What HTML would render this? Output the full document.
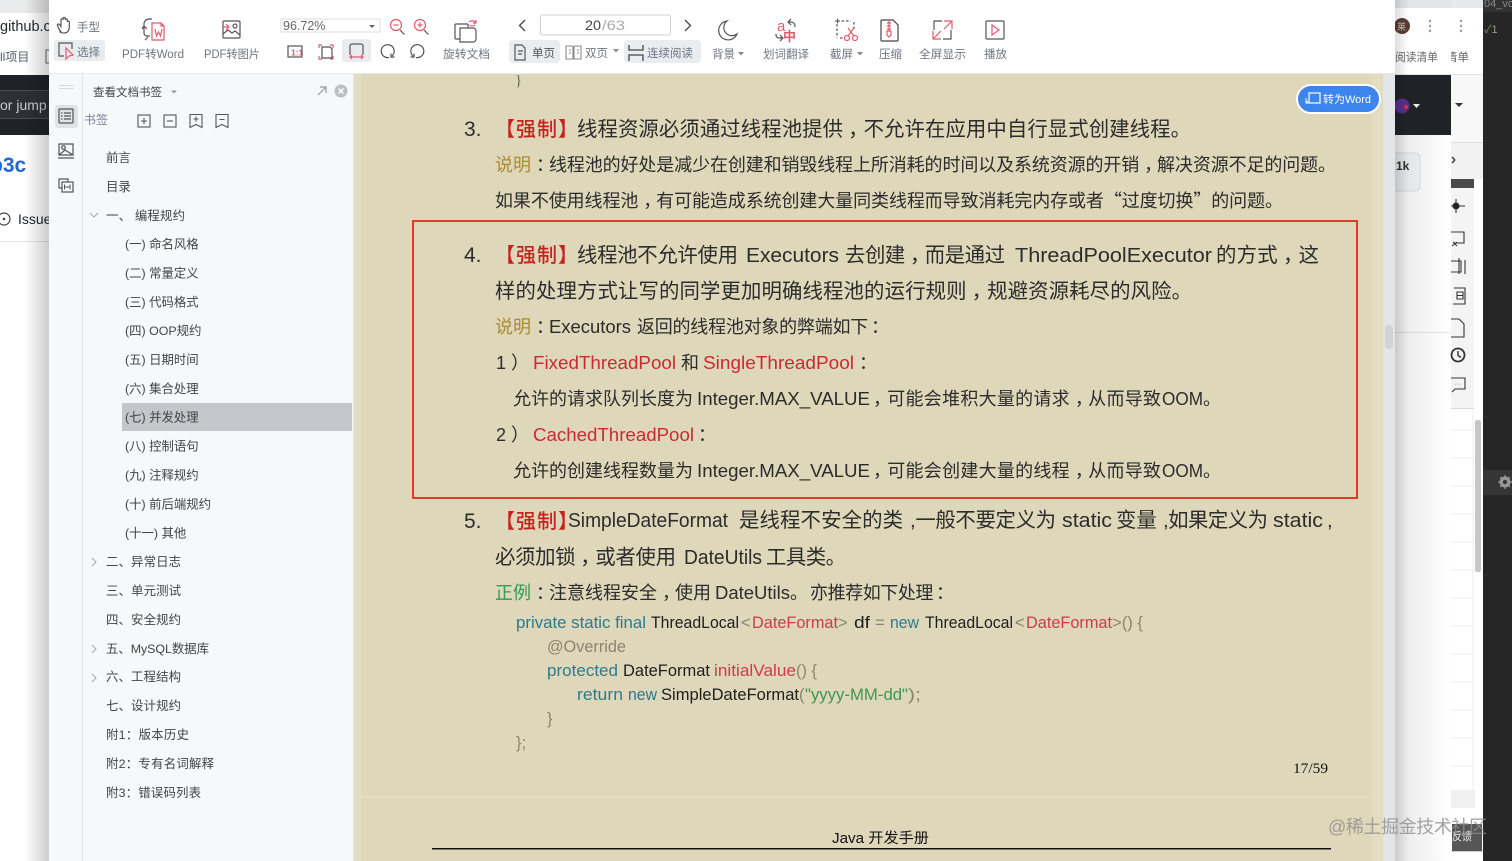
<!DOCTYPE html>
<html lang="zh"><head><meta charset="utf-8"><title>PDF</title>
<style>
html,body{margin:0;padding:0;background:#252525;width:1512px;height:861px;overflow:hidden}
body>svg{display:block;position:absolute;left:0;top:0;filter:blur(.3px)}
text{font-family:"Liberation Sans","Noto Sans CJK SC",sans-serif;white-space:pre}
.tb{font-size:11.5px;fill:#6f7680}
.sb{font-size:12.4px;fill:#444}
.d{font-size:20.4px;fill:#2c2c2c}
.s{font-size:18px;fill:#2c2c2c}
.r{fill:#c92a33}
.br{font-size:20px;fill:#c4231d;font-weight:500}
.o{font-size:18px;fill:#a98c33}
.g{font-size:18px;fill:#2f9a52}
.c{font-size:16.5px;fill:#1e1e1e}
.k{fill:#2b7b8f}.m{fill:#8a8572}.e{fill:#cf3a4c}.n{fill:#3f9650}
.q{font-family:"Noto Sans CJK SC",sans-serif}
.ic{fill:none;stroke:#555;stroke-width:1.2}
.ir{fill:none;stroke:#e2596d;stroke-width:1.2}
</style></head><body>
<svg width="1512" height="861" viewBox="0 0 1512 861" xmlns="http://www.w3.org/2000/svg">
<defs>
<linearGradient id="sh" x1="0" x2="1"><stop offset="0" stop-color="#000" stop-opacity="0"/><stop offset="1" stop-color="#000" stop-opacity=".2"/></linearGradient>
<linearGradient id="shr" x1="0" x2="1"><stop offset="0" stop-color="#000" stop-opacity=".13"/><stop offset="1" stop-color="#000" stop-opacity="0"/></linearGradient>
<clipPath id="cl"><rect x="1451" y="40" width="32" height="30"/></clipPath>
</defs>

<!-- left background window -->
<rect x="0" y="0" width="49" height="861" fill="#fff"/>
<rect x="0" y="0" width="49" height="13" fill="#e9eaeb"/>
<text x="0" y="31" font-size="14.5" fill="#24292f">github.c</text>
<text x="0" y="61" font-size="12" fill="#57606a">ll项目</text>
<rect x="46" y="50" width="4" height="13" fill="none" stroke="#666"/>
<rect x="0" y="75" width="49" height="60" fill="#1f2328"/>
<rect x="0" y="90" width="49" height="29" fill="#2d3136"/>
<rect x="0" y="90" width="49" height="1" fill="#4a4e53"/>
<rect x="0" y="118" width="49" height="1" fill="#4a4e53"/>
<text x="0" y="110" font-size="14" fill="#c9ccd0">or jump</text>
<text x="-10" y="172" font-size="21" font-weight="700" fill="#2268d2">b3c</text>
<circle cx="4" cy="219" r="6" fill="none" stroke="#444" stroke-width="1.2"/><circle cx="4" cy="219" r="1.3" fill="#444"/>
<text x="18" y="224" font-size="14" fill="#24292f">Issue</text>
<rect x="0" y="241" width="49" height="1" fill="#e1e3e5"/>
<rect x="25" y="0" width="24" height="861" fill="url(#sh)"/>

<!-- right background windows -->
<rect x="1395" y="0" width="56" height="861" fill="#fff"/>
<rect x="1395" y="0" width="56" height="8" fill="#e3e5e7"/>
<circle cx="1402" cy="26" r="8" fill="#5a3c34"/>
<text x="1397" y="30" font-size="9" fill="#d8c8c0">莱</text>
<circle cx="1430" cy="21" r="1.2" fill="#999"/><circle cx="1430" cy="26" r="1.2" fill="#999"/><circle cx="1430" cy="31" r="1.2" fill="#999"/>
<text x="1395" y="61" font-size="11.5" fill="#666" textLength="43" lengthAdjust="spacingAndGlyphs">阅读清单</text>
<rect x="1395" y="74" width="56" height="1" fill="#e2e2e2"/>
<rect x="1395" y="75" width="56" height="60" fill="#1f2328"/>
<circle cx="1402" cy="106" r="7.5" fill="#5a2d8a"/><circle cx="1406" cy="107" r="2" fill="#d33"/>
<path d="M1413 104h7l-3.500 4z" fill="#eee"/>
<rect x="1380" y="153" width="40" height="38" rx="5" fill="#f6f7f8" stroke="#e1e3e6"/>
<text x="1396" y="170" font-size="12" font-weight="700" fill="#333">1k</text>
<rect x="1395" y="332" width="56" height="1" fill="#e6e7e9"/>
<rect x="1395" y="135" width="56" height="726" fill="url(#shr)" opacity=".7"/>
<rect x="1395" y="0" width="14" height="861" fill="url(#shr)"/>

<rect x="1451" y="0" width="32" height="861" fill="#fff"/>
<rect x="1451" y="0" width="32" height="8" fill="#e7e8e9"/>
<circle cx="1461" cy="21" r="1.2" fill="#999"/><circle cx="1461" cy="26" r="1.2" fill="#999"/><circle cx="1461" cy="31" r="1.2" fill="#999"/>
<text x="1446" y="61" font-size="11.5" fill="#666" clip-path="url(#cl)">清单</text>
<rect x="1451" y="74" width="32" height="1" fill="#e2e2e2"/>
<rect x="1451" y="75" width="32" height="68" fill="#f8f8f8"/>
<path d="M1455 103h8l-4 4z" fill="#333"/>
<rect x="1451" y="143" width="32" height="36" fill="#f2f2f2"/><rect x="1451" y="142" width="32" height="1" fill="#ddd"/>
<path d="M1452 157l3 3m-3 3l3-3" fill="none" stroke="#333" stroke-width="1.4"/>
<rect x="1451" y="179" width="23" height="9" fill="#4a4a4a"/>
<rect x="1451" y="188" width="23" height="220" fill="#f4f4f4"/>
<rect x="1451" y="408" width="23" height="1" fill="#d8d8d8"/>
<g fill="none" stroke="#333" stroke-width="1.1">
<path d="M1451 206h14M1456 199v14"/><circle cx="1456" cy="206" r="3" fill="#222"/>
<path d="M1451 232h13v11h-10M1452 246l5-4m-4 0l4 4"/>
<path d="M1451 261h10v11h-10M1459 258v16M1465 260v14"/>
<path d="M1454 288h11v16h-12M1457 292h6v7h-6zM1457 295.500h6"/>
<path d="M1451 319h8l5 5v13h-13"/>
<circle cx="1458" cy="355" r="6.500" stroke-width="1.800"/><path d="M1458 351v4.500l3 2" stroke-width="1.400"/>
<path d="M1451 378h14v11h-10l-3 3"/>
</g>
<text x="1454" y="386" font-size="7" fill="#555">···</text>
<g stroke="#eeeeee"><path d="M1452 430h22M1452 458h22M1452 486h22M1452 514h22M1452 542h22M1452 570h22M1452 598h22M1452 626h22M1452 654h22M1452 682h22M1452 710h22M1452 738h22M1452 766h22M1473 410v380"/></g>
<rect x="1451" y="790" width="24" height="18" fill="#f0f0f0"/>
<rect x="1475" y="420" width="6" height="152" rx="2" fill="#c6c6c6"/>
<rect x="1452" y="824" width="30" height="27" fill="#565656"/>
<text x="1452" y="840" font-size="11" fill="#eee" textLength="20" lengthAdjust="spacingAndGlyphs">反馈</text>
<rect x="1451" y="851" width="32" height="1" fill="#ccc"/>

<rect x="1483" y="0" width="29" height="861" fill="#262626"/>
<rect x="1483" y="0" width="29" height="12" fill="#333"/>
<text x="1484" y="7" font-size="11" fill="#888">04_vo</text>
<text x="1484" y="33" font-size="11" fill="#6a9a5a">✓<tspan fill="#999">1</tspan></text>
<rect x="1483" y="470" width="29" height="25" fill="#353535"/>
<circle cx="1505" cy="482" r="4" fill="none" stroke="#999" stroke-width="3"/>
<path d="M1505 475v14M1498 482h14M1500 477l10 10M1510 477l-10 10" stroke="#999" stroke-width="1.200"/>
<circle cx="1505" cy="482" r="2" fill="#353535"/>

<!-- main window -->
<rect x="49" y="0" width="1346" height="74" fill="#fff"/>
<rect x="49" y="73" width="1346" height="1" fill="#e9e9e9"/>
<rect x="49" y="74" width="33" height="787" fill="#f7f8fa"/>
<rect x="82" y="74" width="272" height="787" fill="#f7f8fa"/>
<rect x="82" y="74" width="1" height="787" fill="#e4e5e8"/>
<rect x="353" y="74" width="1" height="787" fill="#e9e6d8"/>
<rect x="354" y="74" width="1029" height="787" fill="#dfd7b9"/>
<rect x="354" y="74" width="8" height="787" fill="#e4dcc0"/>
<rect x="1372" y="74" width="11" height="787" fill="#e4dcc0"/>
<rect x="362" y="796" width="1010" height="2" fill="#e3dcc2"/>
<rect x="1383" y="74" width="12" height="787" fill="#e4e5e7"/>
<rect x="1385" y="325" width="8" height="24" rx="4" fill="#d2d3d6"/>

<!-- toolbar left -->
<g class="ic">
<path d="M61 32c-2-3-3-5-3.500-6.500-.5-1.500 1-2 2-1l1.500 2V20c0-1.500 2-1.500 2 0v-1.500c0-1.500 2.200-1.500 2.200 0V20c0-1.500 2.100-1.500 2.100 0v2c0-1.200 2-1.200 2 0v5c0 3-1.500 6-5 6-2 0-3.500-.2-4.300-1z"/>
</g>
<text x="77" y="31" class="tb" textLength="23" lengthAdjust="spacingAndGlyphs">手型</text>
<rect x="54" y="40" width="51" height="21" rx="3" fill="#e8ecef"/>
<path class="ic" d="M72 49v-6H59v13h5"/>
<path class="ir" d="M66 48v11l3-3 4-1z"/>
<text x="77" y="56" class="tb" textLength="23" lengthAdjust="spacingAndGlyphs">选择</text>

<path class="ic" d="M150 36h-3a3 3 0 0 1-3-3v-9a5 5 0 0 1 5-5h3M147 29l-3-3-2 3M148 37l-3 3"/>
<path class="ir" d="M152 23h9l3 3v14h-12zM161 23v3h3M155 29l1.500 7 2-4 2 4 1.500-7"/>
<text x="122" y="58" class="tb" textLength="62" lengthAdjust="spacingAndGlyphs">PDF转Word</text>
<rect class="ic" x="223" y="21" width="17" height="17" rx="1"/>
<circle class="ic" cx="235" cy="26" r="2"/>
<path class="ic" d="M223 34l5-4 4 3 3-2 5 4"/>
<path class="ir" d="M222 27h7m-3-3 3 3-3 3"/>
<text x="204" y="58" class="tb" textLength="56" lengthAdjust="spacingAndGlyphs">PDF转图片</text>

<rect x="281" y="19" width="99" height="13" fill="#fff" stroke="#dcdde0"/>
<text x="283" y="30" font-size="12.500" fill="#666">96.72%</text>
<path d="M369 25h6l-3 3z" fill="#666"/>
<circle class="ir" cx="396" cy="25" r="5.500"/><path class="ic" d="M400 30l4.500 4.500"/><path class="ir" d="M393.500 25h5"/>
<circle class="ir" cx="420" cy="25" r="5.500"/><path class="ic" d="M424 30l4.500 4.500"/><path class="ir" d="M417.500 25h5M420 22.500v5"/>

<rect class="ic" x="288" y="46" width="14" height="11"/>
<text x="291" y="55.500" font-size="8.500" font-weight="700" fill="#e2596d">1:1</text>
<path class="ic" d="M322 47h8l2 2v9h-10z"/>
<path class="ir" d="M319 48v-3h3M333 48v-3h-3M319 56v3h3M333 56v3h-3"/>
<rect x="342" y="39" width="29" height="23" rx="3" fill="#e8ecef"/>
<path class="ic" d="M350 55v-9a2 2 0 0 1 2-2h9a2 2 0 0 1 2 2v9"/>
<path class="ir" d="M350 57h13M352 55l-2 2 2 2M361 55l2 2-2 2"/>
<path class="ic" d="M392 56a6.500 6.500 0 1 0-3 1.500M391 53.500v3.500h3.500"/>
<path class="ic" d="M413 56a6.500 6.500 0 1 1 3 1.500M414 53.500v3.500h-3.500"/>

<rect class="ic" x="455" y="24" width="13" height="15" rx="1"/>
<path d="M460 28h13a3 3 0 0 1 3 3v8a3 3 0 0 1-3 3h-13z" fill="#fff" stroke="#555" stroke-width="1.200"/>
<path class="ir" d="M469 22a4.500 4.500 0 0 1 7 1M476 20v3h-3M475 25a4.500 4.500 0 0 1-5.500 0"/>
<text x="443" y="58" class="tb" textLength="47" lengthAdjust="spacingAndGlyphs">旋转文档</text>

<path d="M525 20l-5.500 5.500 5.500 5.500M685 20l5.500 5.500-5.500 5.500" fill="none" stroke="#444" stroke-width="1.300"/>
<rect x="540.500" y="15" width="130" height="20" rx="2" fill="#fff" stroke="#cfd0d3"/>
<text x="585" y="30" font-size="13.500" fill="#444" textLength="16" lengthAdjust="spacingAndGlyphs">20</text>
<text x="602" y="30" font-size="13.500" fill="#aaa" textLength="23" lengthAdjust="spacingAndGlyphs">/63</text>

<rect x="509" y="40" width="51" height="23" rx="4" fill="#e9edf1"/>
<path class="ic" d="M515 45h7l3 3v12h-10zM518 51h5M518 54h4"/>
<text x="532" y="57" class="tb" textLength="23" lengthAdjust="spacingAndGlyphs" style="fill:#555">单页</text>
<path d="M566 46h6a1 1 0 0 1 1 1v12h-7zM581 46h-6a1 1 0 0 0-1 1v12h7zM569 50h2M569 53h2M577 50h2M577 53h2" fill="none" stroke="#888" stroke-width="1.100"/>
<text x="585" y="57" class="tb" textLength="23" lengthAdjust="spacingAndGlyphs">双页</text>
<path d="M613 49h6l-3 3.500z" fill="#888"/>
<rect x="624" y="40" width="77" height="23" rx="4" fill="#e9edf1"/>
<path d="M629 45v5h14v-5M629 61v-6h14v6" fill="none" stroke="#444" stroke-width="1.300" />
<text x="647" y="57" class="tb" textLength="46" lengthAdjust="spacingAndGlyphs">连续阅读</text>

<path class="ic" d="M727 21a9.500 9.500 0 1 0 10 13 8 8 0 0 1-10-13z"/>
<text x="712" y="58" class="tb" textLength="23" lengthAdjust="spacingAndGlyphs">背景</text>
<path d="M738 52h6l-3 3.500z" fill="#888"/>
<text x="777" y="31" font-size="15" fill="#e2596d">a</text>
<text x="783" y="41" font-size="13" fill="#e2596d" font-weight="700">中</text>
<path class="ic" d="M791 19l-3 3 3 3M788 22h3a4 4 0 0 1 4 4v1M776 34v1a3 3 0 0 0 3 3h3M780 35l3 3-3 3"/>
<text x="763" y="58" class="tb" textLength="46" lengthAdjust="spacingAndGlyphs">划词翻译</text>
<path class="ic" d="M837 21h14M854 22v8M837 24v14M840 38h4" stroke-dasharray="2.500 2"/>
<path d="M835 21h5M837.500 18.500v5" stroke="#555" fill="none"/>
<circle class="ir" cx="847" cy="38" r="2.500"/><circle class="ir" cx="855" cy="38" r="2.500"/>
<path class="ir" d="M848 36l6-8M854 36l-6-8"/>
<text x="830" y="58" class="tb" textLength="23" lengthAdjust="spacingAndGlyphs">截屏</text>
<path d="M857 52h6l-3 3.500z" fill="#888"/>
<path d="M882 20h11l5 5v15a1 1 0 0 1-1 1h-15a1 1 0 0 1-1-1V21a1 1 0 0 1 1-1z" fill="none" stroke="#444" stroke-width="1.200"/>
<path class="ir" d="M889 21v10M887 23h4M887 26h4M887 29h4M887 31h4v4l-2 2-2-2z"/>
<text x="879" y="58" class="tb" textLength="23" lengthAdjust="spacingAndGlyphs">压缩</text>
<path class="ic" d="M934 30v-9h8M951 30v9h-8"/>
<path class="ir" d="M944 21h8v8M952 21l-8 8M933 31v8h8M933 39l8-8"/>
<text x="919" y="58" class="tb" textLength="47" lengthAdjust="spacingAndGlyphs">全屏显示</text>
<rect class="ic" x="986" y="21" width="18" height="18" rx="1"/>
<path class="ir" d="M992 25l7 5-7 5z"/>
<text x="984" y="58" class="tb" textLength="23" lengthAdjust="spacingAndGlyphs">播放</text>

<!-- rail -->
<rect x="59" y="85" width="15" height="1" fill="#d8d9dc"/><rect x="59" y="88" width="15" height="1" fill="#d8d9dc"/>
<rect x="55" y="105" width="23" height="23" rx="3" fill="#e1e2e4"/>
<rect class="ic" x="59" y="109" width="14" height="14" rx="1"/>
<path d="M61 113h1.500M61 116h1.500M61 119h1.500M64 113h7M64 116h7M64 119h7" stroke="#555" stroke-width="1.200"/>
<path class="ic" d="M59 144h14v11H59zM58 158h16"/><circle class="ic" cx="63.500" cy="147.500" r="1.800"/><path class="ic" d="M59 155l6-5 8 5"/>
<path class="ic" d="M62 188h-3v-9h9v3"/><rect class="ic" x="62" y="182" width="11" height="10"/>
<path d="M64.500 184.500v5M70 184.500v5M64.500 187h5.500" stroke="#555" fill="none"/>

<!-- sidebar head -->
<text x="93" y="96" font-size="11.500" fill="#444" textLength="69" lengthAdjust="spacingAndGlyphs">查看文档书签</text>
<path d="M171 90.500h6l-3 3z" fill="#999"/>
<path d="M318 95l8-8M320 87h6v6" fill="none" stroke="#999" stroke-width="1.200"/>
<circle cx="341" cy="91" r="6.500" fill="#bdbec1"/>
<path d="M338.500 88.500l5 5M343.500 88.500l-5 5" stroke="#fff" stroke-width="1.500"/>
<text x="84" y="124" font-size="12" fill="#7a8296">书签</text>
<g fill="none" stroke="#555" stroke-width="1.100">
<rect x="138" y="115" width="12" height="12"/><path d="M141 121h6M144 118v6"/>
<rect x="164" y="115" width="12" height="12"/><path d="M167 121h6"/>
<path d="M190 114.500h12v13l-6-3-6 3zM193.500 119h5M196 116.500v5"/>
<path d="M216 114.500h12v13l-6-3-6 3zM219.500 119.500h5"/>
</g>

<!-- bookmarks -->
<rect x="122" y="403" width="230" height="28" fill="#c5c6cb"/>
<text x="106" y="162" class="sb">前言</text>
<text x="106" y="191" class="sb">目录</text>
<text x="106" y="220" class="sb" textLength="79" lengthAdjust="spacing">一、 编程规约</text>
<text x="125" y="248.500" class="sb">(一) 命名风格</text>
<text x="125" y="277.500" class="sb">(二) 常量定义</text>
<text x="125" y="306.500" class="sb">(三) 代码格式</text>
<text x="125" y="335" class="sb">(四) OOP规约</text>
<text x="125" y="364" class="sb">(五) 日期时间</text>
<text x="125" y="393" class="sb">(六) 集合处理</text>
<text x="125" y="421.500" class="sb">(七) 并发处理</text>
<text x="125" y="450.500" class="sb">(八) 控制语句</text>
<text x="125" y="479.500" class="sb">(九) 注释规约</text>
<text x="125" y="508.500" class="sb">(十) 前后端规约</text>
<text x="125" y="537.500" class="sb">(十一) 其他</text>
<text x="106" y="566" class="sb" textLength="75" lengthAdjust="spacing">二、异常日志</text>
<text x="106" y="595" class="sb" textLength="75" lengthAdjust="spacing">三、单元测试</text>
<text x="106" y="624" class="sb" textLength="75" lengthAdjust="spacing">四、安全规约</text>
<text x="106" y="653" class="sb" textLength="103" lengthAdjust="spacing">五、MySQL数据库</text>
<text x="106" y="681" class="sb" textLength="75" lengthAdjust="spacing">六、工程结构</text>
<text x="106" y="710" class="sb" textLength="75" lengthAdjust="spacing">七、设计规约</text>
<text x="106" y="739" class="sb" textLength="83" lengthAdjust="spacing">附1：版本历史</text>
<text x="106" y="768" class="sb" textLength="108" lengthAdjust="spacing">附2：专有名词解释</text>
<text x="106" y="797" class="sb" textLength="95" lengthAdjust="spacing">附3：错误码列表</text>
<g fill="none" stroke="#aaa" stroke-width="1.100">
<path d="M90 213l4 4 4-4M92 558l4 4-4 4M92 645l4 4-4 4M92 674l4 4-4 4"/>
</g>

<!-- document -->
<text x="515" y="85" style="font-family:'Liberation Serif',serif;font-size:15px" fill="#666">}</text>

<text x="464" y="136" class="d" style="font-size:21px">3.</text>
<text x="495" y="136" class="br">【</text><text x="516" y="136" class="br" textLength="41" lengthAdjust="spacing">强制</text><text x="558" y="136" class="br">】</text>
<text x="577" y="136" class="d" textLength="614" lengthAdjust="spacing">线程资源必须通过线程池提供<tspan dx="5">，</tspan><tspan dx="-5">不允许在应用中自行显式创建线程。</tspan></text>
<text x="495" y="171" class="o" textLength="36" lengthAdjust="spacing">说明</text><text x="536" y="171" class="s">：</text>
<text x="549" y="171" class="s" textLength="787" lengthAdjust="spacing">线程池的好处是减少在创建和销毁线程上所消耗的时间以及系统资源的开销<tspan dx="5">，</tspan><tspan dx="-5">解决资源不足的问题。</tspan></text>
<text x="495" y="207" class="s" textLength="788" lengthAdjust="spacing">如果不使用线程池<tspan dx="5">，</tspan><tspan dx="-5">有可能造成系统创建大量同类线程而导致消耗完内存或者</tspan><tspan class="q">“</tspan>过度切换<tspan class="q">”</tspan>的问题。</text>

<rect x="413" y="221" width="944" height="277" fill="none" stroke="#e23a28" stroke-width="2"/>

<text x="464" y="262" class="d" style="font-size:21px">4.</text>
<text x="495" y="262" class="br">【</text><text x="516" y="262" class="br" textLength="41" lengthAdjust="spacing">强制</text><text x="558" y="262" class="br">】</text>
<text x="577" y="262" class="d" textLength="161" lengthAdjust="spacing">线程池不允许使用</text>
<text x="746" y="262" class="d" textLength="93" lengthAdjust="spacingAndGlyphs">Executors</text>
<text x="845" y="262" class="d" textLength="160" lengthAdjust="spacing">去创建<tspan dx="5">，</tspan><tspan dx="-5">而是通过</tspan></text>
<text x="1015" y="262" class="d" textLength="197" lengthAdjust="spacingAndGlyphs">ThreadPoolExecutor</text>
<text x="1216" y="262" class="d" textLength="103" lengthAdjust="spacing">的方式<tspan dx="5">，</tspan><tspan dx="-5">这</tspan></text>
<text x="495" y="298" class="d" textLength="697" lengthAdjust="spacing">样的处理方式让写的同学更加明确线程池的运行规则<tspan dx="5">，</tspan><tspan dx="-5">规避资源耗尽的风险。</tspan></text>
<text x="495" y="333" class="o" textLength="36" lengthAdjust="spacing">说明</text><text x="536" y="333" class="s">：</text>
<text x="549" y="333" class="s" textLength="82" lengthAdjust="spacingAndGlyphs">Executors</text>
<text x="637" y="333" class="s" textLength="252" lengthAdjust="spacing">返回的线程池对象的弊端如下<tspan dx="3">：</tspan></text>
<text x="496" y="369" class="s">1</text><text x="511" y="369" class="s">）</text>
<text x="533" y="369" class="s r" textLength="143" lengthAdjust="spacingAndGlyphs">FixedThreadPool</text>
<text x="681" y="369" class="s">和</text>
<text x="703" y="369" class="s r" textLength="151" lengthAdjust="spacingAndGlyphs">SingleThreadPool</text>
<text x="859" y="369" class="s">：</text>
<text x="513" y="405" class="s" textLength="180" lengthAdjust="spacing">允许的请求队列长度为</text>
<text x="697" y="405" class="s" textLength="173" lengthAdjust="spacingAndGlyphs">Integer.MAX_VALUE</text>
<text x="869" y="405" class="s" textLength="288" lengthAdjust="spacing"><tspan dx="4">，</tspan><tspan dx="-4">可能会堆积大量的请求</tspan><tspan dx="5">，</tspan><tspan dx="-5">从而导致</tspan></text>
<text x="1162" y="405" class="s" textLength="41" lengthAdjust="spacingAndGlyphs">OOM</text><text x="1203" y="405" class="s">。</text>
<text x="496" y="441" class="s">2</text><text x="511" y="441" class="s">）</text>
<text x="533" y="441" class="s r" textLength="161" lengthAdjust="spacingAndGlyphs">CachedThreadPool</text>
<text x="698" y="441" class="s">：</text>
<text x="513" y="477" class="s" textLength="180" lengthAdjust="spacing">允许的创建线程数量为</text>
<text x="697" y="477" class="s" textLength="173" lengthAdjust="spacingAndGlyphs">Integer.MAX_VALUE</text>
<text x="869" y="477" class="s" textLength="288" lengthAdjust="spacing"><tspan dx="4">，</tspan><tspan dx="-4">可能会创建大量的线程</tspan><tspan dx="5">，</tspan><tspan dx="-5">从而导致</tspan></text>
<text x="1162" y="477" class="s" textLength="41" lengthAdjust="spacingAndGlyphs">OOM</text><text x="1203" y="477" class="s">。</text>

<text x="464" y="528" class="d" style="font-size:21px">5.</text>
<text x="495" y="528" class="br">【</text><text x="516" y="528" class="br" textLength="41" lengthAdjust="spacing">强制</text><text x="558" y="528" class="br">】</text>
<text x="568" y="527" class="d" textLength="160" lengthAdjust="spacingAndGlyphs">SimpleDateFormat</text>
<text x="739" y="527" class="d" textLength="164" lengthAdjust="spacing">是线程不安全的类</text>
<text x="910" y="527" class="d" textLength="146" lengthAdjust="spacing">,一般不要定义为</text>
<text x="1062" y="527" class="d" textLength="50" lengthAdjust="spacingAndGlyphs">static</text>
<text x="1116" y="527" class="d">变量</text>
<text x="1163" y="527" class="d" textLength="105" lengthAdjust="spacing">,如果定义为</text>
<text x="1273" y="527" class="d" textLength="50" lengthAdjust="spacingAndGlyphs">static</text>
<text x="1327" y="527" class="d">,</text>
<text x="495" y="564" class="d" textLength="181" lengthAdjust="spacing">必须加锁<tspan dx="5">，</tspan><tspan dx="-5">或者使用</tspan></text>
<text x="684" y="564" class="d" textLength="78" lengthAdjust="spacingAndGlyphs">DateUtils</text>
<text x="766" y="564" class="d" textLength="80" lengthAdjust="spacing">工具类。</text>
<text x="495" y="599" class="g" textLength="36" lengthAdjust="spacing">正例</text><text x="536" y="599" class="s">：</text>
<text x="549" y="599" class="s" textLength="162" lengthAdjust="spacing">注意线程安全<tspan dx="5">，</tspan><tspan dx="-5">使用</tspan></text>
<text x="715" y="599" class="s" textLength="75" lengthAdjust="spacingAndGlyphs">DateUtils</text><text x="790" y="599" class="s">。</text>
<text x="810" y="599" class="s" textLength="144" lengthAdjust="spacing">亦推荐如下处理<tspan dx="3">：</tspan></text>

<text x="516" y="628" class="c k" textLength="130" lengthAdjust="spacingAndGlyphs">private static final</text>
<text x="651" y="628" class="c" textLength="88" lengthAdjust="spacingAndGlyphs">ThreadLocal</text>
<text x="741" y="628" class="c m">&lt;</text>
<text x="752" y="628" class="c e" textLength="86" lengthAdjust="spacingAndGlyphs">DateFormat</text>
<text x="838" y="628" class="c m">&gt;</text>
<text x="854" y="628" class="c" textLength="16" lengthAdjust="spacingAndGlyphs">df</text>
<text x="875" y="628" class="c m">=</text>
<text x="890" y="628" class="c k" textLength="29" lengthAdjust="spacingAndGlyphs">new</text>
<text x="925" y="628" class="c" textLength="88" lengthAdjust="spacingAndGlyphs">ThreadLocal</text>
<text x="1015" y="628" class="c m">&lt;</text>
<text x="1026" y="628" class="c e" textLength="86" lengthAdjust="spacingAndGlyphs">DateFormat</text>
<text x="1112" y="628" class="c m" textLength="31" lengthAdjust="spacingAndGlyphs">&gt;() {</text>
<text x="547" y="652" class="c m" textLength="79" lengthAdjust="spacingAndGlyphs">@Override</text>
<text x="547" y="676" class="c k" textLength="71" lengthAdjust="spacingAndGlyphs">protected</text>
<text x="623" y="676" class="c" textLength="87" lengthAdjust="spacingAndGlyphs">DateFormat</text>
<text x="714" y="676" class="c e" textLength="82" lengthAdjust="spacingAndGlyphs">initialValue</text>
<text x="796" y="676" class="c m" textLength="21" lengthAdjust="spacingAndGlyphs">() {</text>
<text x="577" y="700" class="c k" textLength="46" lengthAdjust="spacingAndGlyphs">return</text>
<text x="628" y="700" class="c k" textLength="29" lengthAdjust="spacingAndGlyphs">new</text>
<text x="661" y="700" class="c" textLength="138" lengthAdjust="spacingAndGlyphs">SimpleDateFormat</text>
<text x="799" y="700" class="c m">(</text>
<text x="805" y="700" class="c n" textLength="103" lengthAdjust="spacingAndGlyphs">"yyyy-MM-dd"</text>
<text x="908" y="700" class="c m" textLength="13" lengthAdjust="spacingAndGlyphs">);</text>
<text x="547" y="724" class="c m">}</text>
<text x="516" y="748" class="c m">};</text>

<text x="1293" y="773" style="font-family:'Liberation Serif',serif;font-size:15px;fill:#111" textLength="35" lengthAdjust="spacingAndGlyphs">17/59</text>
<text x="832" y="843" style="font-size:14.500px;fill:#111" textLength="97" lengthAdjust="spacingAndGlyphs">Java 开发手册</text>
<rect x="432" y="848" width="899" height="1.500" fill="#111"/>

<!-- convert button -->
<rect x="1297" y="85" width="83" height="28" rx="14" fill="#3c84ee" stroke="#fff" stroke-width="2"/>
<rect x="1309" y="93" width="11" height="10" fill="none" stroke="#fff" stroke-width="1.200"/>
<path d="M1306 98v5h3M1308 101l-2 2" fill="none" stroke="#fff" stroke-width="1"/>
<text x="1323" y="103" font-size="11" fill="#fff" textLength="48" lengthAdjust="spacingAndGlyphs">转为Word</text>

<!-- watermark -->
<text x="1328" y="833" font-size="18" fill="#8d8d8d" fill-opacity=".8" textLength="159" lengthAdjust="spacing">@稀土掘金技术社区</text>
</svg>
</body></html>
